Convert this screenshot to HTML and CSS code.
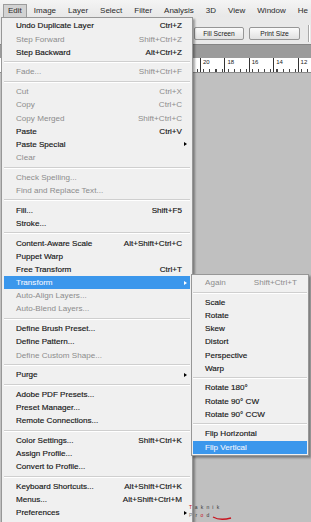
FILE: index.html
```html
<!DOCTYPE html>
<html lang="en">
<head>
    <meta charset="UTF-8">
    <meta name="viewport" content="width=device-width, initial-scale=1.0">
    <title>Edit Menu</title>
    <link rel="stylesheet" href="styles.css">
</head>
<body>
    <div class="window">
        <!-- Menu bar -->
        <div class="menubar">
            <span class="menu-title open">Edit</span>
            <span class="menu-title">Image</span>
            <span class="menu-title">Layer</span>
            <span class="menu-title">Select</span>
            <span class="menu-title">Filter</span>
            <span class="menu-title">Analysis</span>
            <span class="menu-title">3D</span>
            <span class="menu-title">View</span>
            <span class="menu-title">Window</span>
            <span class="menu-title">He</span>
        </div>

        <!-- Workspace behind the menu -->
        <div class="workspace">
            <div class="options">
                <button class="opt-btn">Fill Screen</button>
                <button class="opt-btn">Print Size</button>
                <span class="opt-sep"></span>
            </div>
            <div class="tabbar"></div>
            <div class="ruler">
                <span class="mark">20</span>
                <span class="mark">18</span>
                <span class="mark">16</span>
                <span class="mark">14</span>
                <span class="mark">12</span>
            </div>
            <div class="canvas"></div>
        </div>

        <!-- Edit dropdown -->
        <ul class="dropdown">
            <li class="item"><span>Undo Duplicate Layer</span><span>Ctrl+Z</span></li>
            <li class="item off"><span>Step Forward</span><span>Shift+Ctrl+Z</span></li>
            <li class="item"><span>Step Backward</span><span>Alt+Ctrl+Z</span></li>
            <li class="sep"></li>
            <li class="item off"><span>Fade...</span><span>Shift+Ctrl+F</span></li>
            <li class="sep"></li>
            <li class="item off"><span>Cut</span><span>Ctrl+X</span></li>
            <li class="item off"><span>Copy</span><span>Ctrl+C</span></li>
            <li class="item off"><span>Copy Merged</span><span>Shift+Ctrl+C</span></li>
            <li class="item"><span>Paste</span><span>Ctrl+V</span></li>
            <li class="item sub"><span>Paste Special</span></li>
            <li class="item off"><span>Clear</span></li>
            <li class="sep"></li>
            <li class="item off"><span>Check Spelling...</span></li>
            <li class="item off"><span>Find and Replace Text...</span></li>
            <li class="sep"></li>
            <li class="item"><span>Fill...</span><span>Shift+F5</span></li>
            <li class="item"><span>Stroke...</span></li>
            <li class="sep"></li>
            <li class="item"><span>Content-Aware Scale</span><span>Alt+Shift+Ctrl+C</span></li>
            <li class="item"><span>Puppet Warp</span></li>
            <li class="item"><span>Free Transform</span><span>Ctrl+T</span></li>
            <li class="item sub active">
                <span>Transform</span>
                <!-- Transform submenu -->
                <ul class="submenu">
                    <li class="item off"><span>Again</span><span>Shift+Ctrl+T</span></li>
                    <li class="sep"></li>
                    <li class="item"><span>Scale</span></li>
                    <li class="item"><span>Rotate</span></li>
                    <li class="item"><span>Skew</span></li>
                    <li class="item"><span>Distort</span></li>
                    <li class="item"><span>Perspective</span></li>
                    <li class="item"><span>Warp</span></li>
                    <li class="sep"></li>
                    <li class="item"><span>Rotate 180°</span></li>
                    <li class="item"><span>Rotate 90° CW</span></li>
                    <li class="item"><span>Rotate 90° CCW</span></li>
                    <li class="sep"></li>
                    <li class="item"><span>Flip Horizontal</span></li>
                    <li class="item active"><span>Flip Vertical</span></li>
                </ul>
            </li>
            <li class="item off"><span>Auto-Align Layers...</span></li>
            <li class="item off"><span>Auto-Blend Layers...</span></li>
            <li class="sep"></li>
            <li class="item"><span>Define Brush Preset...</span></li>
            <li class="item"><span>Define Pattern...</span></li>
            <li class="item off"><span>Define Custom Shape...</span></li>
            <li class="sep"></li>
            <li class="item sub"><span>Purge</span></li>
            <li class="sep"></li>
            <li class="item"><span>Adobe PDF Presets...</span></li>
            <li class="item"><span>Preset Manager...</span></li>
            <li class="item"><span>Remote Connections...</span></li>
            <li class="sep"></li>
            <li class="item"><span>Color Settings...</span><span>Shift+Ctrl+K</span></li>
            <li class="item"><span>Assign Profile...</span></li>
            <li class="item"><span>Convert to Profile...</span></li>
            <li class="sep"></li>
            <li class="item"><span>Keyboard Shortcuts...</span><span>Alt+Shift+Ctrl+K</span></li>
            <li class="item"><span>Menus...</span><span>Alt+Shift+Ctrl+M</span></li>
            <li class="item sub"><span>Preferences</span></li>
        </ul>

        <!-- Watermark -->
        <div class="watermark">
            <div><span class="red">T</span>aknik</div>
            <div><span class="grey">P</span>r<span class="red">o</span>d</div>
            <svg class="swoosh" width="20" height="5" viewBox="0 0 20 5">
                <path d="M1 1 Q8 5 19 2" fill="none" stroke="#c8141e" stroke-width="1.4"/>
            </svg>
        </div>
    </div>
</body>
</html>
```

FILE: styles.css
```css
/* General */
body {
    margin: 0;
    font-family: "Liberation Sans", Arial, sans-serif;
    background-color: #c0c0c0;
}

.window {
    position: relative;
    width: 311px;
    height: 522px;
    overflow: hidden;
    display: flex;
    flex-direction: column;
}

/* Menu bar */
.menubar {
    display: flex;
    align-items: flex-end;
    height: 17px;
    padding-left: 4px;
    background: linear-gradient(#f4f4f4, #e8e8e8);
    font-size: 8px;
    color: #2a2a2a;
    white-space: nowrap;
}

.menu-title {
    height: 12px;
    line-height: 12px;
    padding: 0 4px;
    border: 1px solid transparent;
    border-bottom: none;
    margin-left: -1px;
    margin-right: 3px;
}

.menu-title.open {
    background-color: #d2d2d2;
    border-color: #9c9c9c;
}

/* Workspace */
.workspace {
    flex: 1;
    display: flex;
    flex-direction: column;
}

.options {
    display: flex;
    align-items: flex-start;
    height: 27px;
    padding: 10px 0 0 194px;
    box-sizing: border-box;
    background-color: #e9e9e9;
}

.opt-btn {
    width: 50px;
    height: 13px;
    margin-right: 5px;
    padding: 0;
    font-family: "Liberation Sans", Arial, sans-serif;
    font-size: 6.7px;
    color: #222;
    border: 1px solid #969696;
    border-radius: 2px;
    background: linear-gradient(#fbfbfb, #e1e1e1);
}

.opt-btn + .opt-btn {
    width: 51px;
}

.opt-sep {
    width: 1px;
    height: 17px;
    margin-left: 3px;
    margin-top: -2px;
    background-color: #a8a8a8;
    border-right: 1px solid #fff;
}

.tabbar {
    height: 13px;
    background-color: #9b9b9b;
    border-top: 1px solid #858585;
}

.ruler {
    display: flex;
    height: 14px;
    padding-left: 200px;
    background-color: #fff;
    border-bottom: 1px solid #8a8a8a;
    background-image:
        linear-gradient(#fff, #fff),
        repeating-linear-gradient(to right, transparent 0 2px, #444 2px 3px, transparent 3px 6.1px);
    background-size: 100% 11px, 100% 100%;
    background-repeat: no-repeat;
}

.mark {
    width: 24.4px;
    flex-shrink: 0;
    box-sizing: border-box;
    border-left: 1px solid #333;
    padding-left: 2px;
    font-size: 6px;
    line-height: 8px;
    color: #222;
}

.canvas {
    flex: 1;
    background-color: #c0c0c0;
}

/* Dropdown menus */
.dropdown,
.submenu {
    list-style: none;
    margin: 0;
    background-color: #f0f0f0;
    border: 1px solid #979797;
    font-size: 8.1px;
    white-space: nowrap;
}

.dropdown {
    position: absolute;
    top: 17px;
    left: 1px;
    width: 186px;
    padding: 1.4px 2px 4px;
    box-shadow: 2px 2px 2px rgba(0, 0, 0, 0.35);
}

.submenu {
    position: absolute;
    top: -2.4px;
    left: 187px;
    width: 114px;
    padding: 1.4px 1px;
    box-shadow: 2px 2px 2px rgba(0, 0, 0, 0.35);
}

.item {
    position: relative;
    display: flex;
    justify-content: space-between;
    height: 13.2px;
    line-height: 13.2px;
    padding: 0 8px 0 12px;
    color: #161616;
    -webkit-text-stroke: 0.15px #161616;
}

.submenu .item {
    padding: 0 10px 0 12px;
}

.item.off {
    color: #8c8c8c;
    -webkit-text-stroke: 0;
}

.dropdown > .item.active,
.submenu .item.active {
    background-color: #3b97ec;
    color: #eef4ff;
    -webkit-text-stroke: 0.1px #eef4ff;
}

.item.sub::after {
    content: "";
    position: absolute;
    right: 3px;
    top: 4.5px;
    border-left: 3px solid #000;
    border-top: 2.5px solid transparent;
    border-bottom: 2.5px solid transparent;
}

.item.sub.active::after {
    border-left-color: #fff;
}

.sep {
    height: 0;
    margin: 2.25px 0;
    border-top: 1px solid #cfcfcf;
    border-bottom: 1px solid #fff;
}

/* Watermark */
.watermark {
    position: absolute;
    left: 189px;
    top: 503px;
    font-size: 5px;
    line-height: 8px;
    letter-spacing: 3.2px;
    color: #3a3a3a;
}

.watermark .red {
    color: #c8141e;
}

.watermark .grey {
    color: #777;
}

.swoosh {
    position: absolute;
    left: 23px;
    top: 13px;
}
```
